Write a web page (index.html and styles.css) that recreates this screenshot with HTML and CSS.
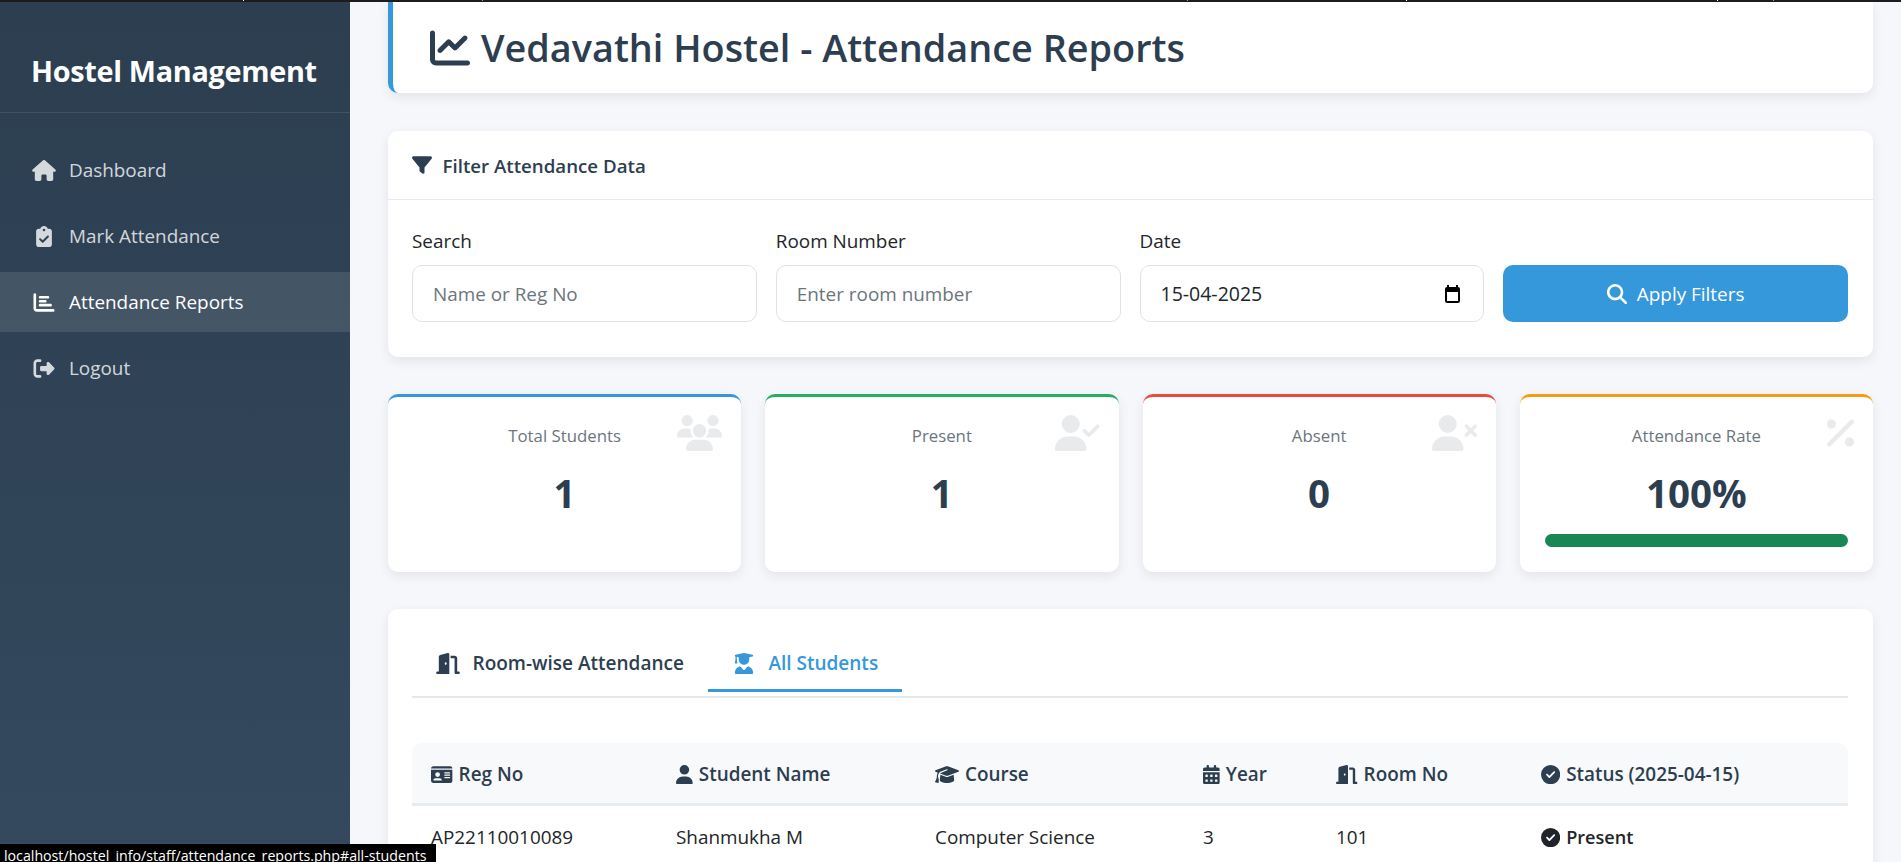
FILE: index.html
```html
<!DOCTYPE html>
<html lang="en">
<head>
    <meta charset="UTF-8">
    <meta name="viewport" content="width=device-width, initial-scale=1.0">
    <title>Vedavathi Hostel | Attendance Reports</title>
    <link rel="stylesheet" href="styles.css">
</head>
<body>
    <svg class="icon-defs" xmlns="http://www.w3.org/2000/svg">
        <symbol id="i-house" viewBox="0 0 576 512"><path d="M575.8 255.5c0 18-15 32.1-32 32.1h-32l.7 160.2c0 2.7-.2 5.4-.5 8.1V472c0 22.1-17.9 40-40 40H456c-1.1 0-2.2 0-3.3-.1c-1.4 .1-2.8 .1-4.2 .1H416 392c-22.1 0-40-17.9-40-40V448 384c0-17.7-14.3-32-32-32H256c-17.7 0-32 14.3-32 32v64 24c0 22.1-17.9 40-40 40H160 128.1c-1.5 0-3-.1-4.5-.2c-1.2 .1-2.4 .2-3.6 .2H104c-22.1 0-40-17.9-40-40V360c0-.9 0-1.9 .1-2.8V287.6H32c-18 0-32-14-32-32.1c0-9 3-17 10-24L266.4 8c7-7 15-8 22-8s15 2 21 7L564.8 231.5c8 7 12 15 11 24z"/></symbol>
        <symbol id="i-clipboard" viewBox="0 0 384 512"><path d="M192 0c-41.8 0-77.4 26.7-90.5 64H64C28.7 64 0 92.7 0 128V448c0 35.3 28.7 64 64 64H320c35.3 0 64-28.7 64-64V128c0-35.3-28.7-64-64-64H282.5C269.4 26.7 233.8 0 192 0zm0 64a32 32 0 1 1 0 64 32 32 0 1 1 0-64zM305 273L177 401c-9.4 9.4-24.6 9.4-33.9 0L79 337c-9.4-9.4-9.4-24.6 0-33.9s24.6-9.4 33.9 0l47 47L271 239c9.4-9.4 24.6-9.4 33.9 0s9.4 24.6 0 33.9z"/></symbol>
        <symbol id="i-chart-bar" viewBox="0 0 512 512"><path d="M32 32c17.7 0 32 14.3 32 32V400c0 8.8 7.2 16 16 16H480c17.7 0 32 14.3 32 32s-14.3 32-32 32H80c-44.2 0-80-35.8-80-80V64C0 46.3 14.3 32 32 32zm96 96c0-17.7 14.3-32 32-32l192 0c17.7 0 32 14.3 32 32s-14.3 32-32 32l-192 0c-17.7 0-32-14.3-32-32zm32 64H288c17.7 0 32 14.3 32 32s-14.3 32-32 32H160c-17.7 0-32-14.3-32-32s14.3-32 32-32zm0 96H416c17.7 0 32 14.3 32 32s-14.3 32-32 32H160c-17.7 0-32-14.3-32-32s14.3-32 32-32z"/></symbol>
        <symbol id="i-logout" viewBox="0 0 512 512"><path d="M377.9 105.9L500.7 228.7c7.2 7.2 11.3 17.1 11.3 27.3s-4.1 20.1-11.3 27.3L377.9 406.1c-6.4 6.4-15 9.9-24 9.9c-18.7 0-33.9-15.2-33.9-33.9l0-62.1-128 0c-17.7 0-32-14.3-32-32l0-64c0-17.7 14.3-32 32-32l128 0 0-62.1c0-18.7 15.2-33.9 33.9-33.9c9 0 17.6 3.6 24 9.9zM160 96L96 96c-17.7 0-32 14.3-32 32l0 256c0 17.7 14.3 32 32 32l64 0c17.7 0 32 14.3 32 32s-14.3 32-32 32l-64 0c-53 0-96-43-96-96L0 128C0 75 43 32 96 32l64 0c17.7 0 32 14.3 32 32s-14.3 32-32 32z"/></symbol>
        <symbol id="i-chart-line" viewBox="0 0 512 512"><path d="M64 64c0-17.7-14.3-32-32-32S0 46.3 0 64V400c0 44.2 35.8 80 80 80H480c17.7 0 32-14.3 32-32s-14.3-32-32-32H80c-8.8 0-16-7.2-16-16V64zm406.6 86.6c12.5-12.5 12.5-32.8 0-45.3s-32.8-12.5-45.3 0L320 210.7l-57.4-57.4c-12.5-12.5-32.8-12.5-45.3 0l-112 112c-12.5 12.5-12.5 32.8 0 45.3s32.8 12.5 45.3 0L240 221.3l57.4 57.4c12.5 12.5 32.8 12.5 45.3 0l128-128z"/></symbol>
        <symbol id="i-filter" viewBox="0 0 512 512"><path d="M3.9 54.9C10.5 40.9 24.5 32 40 32H472c15.5 0 29.5 8.9 36.1 22.9s4.6 30.5-5.2 42.5L320 320.9V448c0 12.1-6.8 23.2-17.7 28.6s-23.8 4.3-33.5-3l-64-48c-8.1-6-12.8-15.5-12.8-25.6V320.9L9 97.3C-.7 85.4-2.8 68.8 3.9 54.9z"/></symbol>
        <symbol id="i-search" viewBox="0 0 512 512"><path d="M416 208c0 45.9-14.9 88.3-40 122.7L502.6 457.4c12.5 12.5 12.5 32.8 0 45.3s-32.8 12.5-45.3 0L330.7 376c-34.4 25.2-76.8 40-122.7 40C93.1 416 0 322.9 0 208S93.1 0 208 0S416 93.1 416 208zM208 352a144 144 0 1 0 0-288 144 144 0 1 0 0 288z"/></symbol>
        <symbol id="i-users" viewBox="0 0 640 512"><path d="M144 0a80 80 0 1 1 0 160A80 80 0 1 1 144 0zM512 0a80 80 0 1 1 0 160A80 80 0 1 1 512 0zM0 298.7C0 239.8 47.8 192 106.7 192h42.7c15.9 0 31 3.5 44.6 9.7c-1.3 7.2-1.9 14.7-1.9 22.3c0 38.2 16.8 72.5 43.3 96c-.2 0-.4 0-.7 0H21.3C9.6 320 0 310.4 0 298.7zM405.3 320c-.2 0-.4 0-.7 0c26.6-23.5 43.3-57.8 43.3-96c0-7.6-.7-15-1.9-22.3c13.6-6.3 28.7-9.7 44.6-9.7h42.7C592.2 192 640 239.8 640 298.7c0 11.8-9.6 21.3-21.3 21.3H405.3zM224 224a96 96 0 1 1 192 0 96 96 0 1 1 -192 0zM128 485.3C128 411.7 187.7 352 261.3 352H378.7C452.3 352 512 411.7 512 485.3c0 14.7-11.9 26.7-26.7 26.7H154.7c-14.7 0-26.7-11.9-26.7-26.7z"/></symbol>
        <symbol id="i-user-check" viewBox="0 0 640 512"><path d="M96 128a128 128 0 1 1 256 0A128 128 0 1 1 96 128zM0 482.3C0 383.8 79.8 304 178.3 304h91.4C368.2 304 448 383.8 448 482.3c0 16.4-13.3 29.7-29.7 29.7H29.7C13.3 512 0 498.7 0 482.3zM625 177L497 305c-9.4 9.4-24.6 9.4-33.9 0l-64-64c-9.4-9.4-9.4-24.6 0-33.9s24.6-9.4 33.9 0l47 47L591 143c9.4-9.4 24.6-9.4 33.9 0s9.4 24.6 0 33.9z"/></symbol>
        <symbol id="i-user-xmark" viewBox="0 0 640 512"><path d="M96 128a128 128 0 1 1 256 0A128 128 0 1 1 96 128zM0 482.3C0 383.8 79.8 304 178.3 304h91.4C368.2 304 448 383.8 448 482.3c0 16.4-13.3 29.7-29.7 29.7H29.7C13.3 512 0 498.7 0 482.3zM471 143c9.4-9.4 24.6-9.4 33.9 0l47 47 47-47c9.4-9.4 24.6-9.4 33.9 0s9.4 24.6 0 33.9l-47 47 47 47c9.4 9.4 9.4 24.6 0 33.9s-24.6 9.4-33.9 0l-47-47-47 47c-9.4 9.4-24.6 9.4-33.9 0s-9.4-24.6 0-33.9l47-47-47-47c-9.4-9.4-9.4-24.6 0-33.9z"/></symbol>
        <symbol id="i-percent" viewBox="0 0 384 512"><path d="M374.6 118.6c12.5-12.5 12.5-32.8 0-45.3s-32.8-12.5-45.3 0l-320 320c-12.5 12.5-12.5 32.8 0 45.3s32.8 12.5 45.3 0l320-320zM128 128A64 64 0 1 0 0 128a64 64 0 1 0 128 0zM384 384a64 64 0 1 0 -128 0 64 64 0 1 0 128 0z"/></symbol>
        <symbol id="i-door" viewBox="0 0 576 512"><path d="M320 32c0-9.9-4.5-19.2-12.3-25.2S289.8-1.4 280.2 1l-179.9 45C79 51.3 64 70.5 64 92.5V448H32c-17.7 0-32 14.3-32 32s14.3 32 32 32H96 288h32V480 32zM256 256c0 17.7-10.7 32-24 32s-24-14.3-24-32s10.7-32 24-32s24 14.3 24 32zm96-128h96V480c0 17.7 14.3 32 32 32h64c17.7 0 32-14.3 32-32s-14.3-32-32-32H512V128c0-35.3-28.7-64-64-64H352v64z"/></symbol>
        <symbol id="i-graduate" viewBox="0 0 448 512"><path d="M219.3 .5c3.1-.6 6.3-.6 9.4 0l200 40C439.9 42.7 448 52.6 448 64s-8.1 21.3-19.3 23.5L352 102.9V160c0 70.7-57.3 128-128 128s-128-57.3-128-128V102.9L48 93.3v65.1l15.7 78.4c.9 4.7-.3 9.6-3.3 13.3s-7.6 5.9-12.4 5.9H16c-4.8 0-9.3-2.1-12.4-5.9s-4.3-8.6-3.3-13.3L16 158.4V86.6C6.5 83.3 0 74.3 0 64C0 52.6 8.1 42.7 19.3 40.5l200-40zM111.9 327.7c10.5-3.4 21.8 .4 29.4 8.5l71 75.5c6.3 6.7 17 6.7 23.3 0l71-75.5c7.6-8.1 18.9-11.9 29.4-8.5C401 348.6 448 409.4 448 481.3c0 17-13.8 30.7-30.7 30.7H30.7C13.8 512 0 498.2 0 481.3c0-71.9 47-132.7 111.9-153.6z"/></symbol>
        <symbol id="i-id-card" viewBox="0 0 576 512"><path d="M0 96l576 0c0-35.3-28.7-64-64-64H64C28.7 32 0 60.7 0 96zm0 32V416c0 35.3 28.7 64 64 64H512c35.3 0 64-28.7 64-64V128H0zM64 405.3c0-29.5 23.9-53.3 53.3-53.3H234.7c29.5 0 53.3 23.9 53.3 53.3c0 5.9-4.8 10.7-10.7 10.7H74.7c-5.9 0-10.7-4.8-10.7-10.7zM176 192a64 64 0 1 1 0 128 64 64 0 1 1 0-128zm176 16c0-8.8 7.2-16 16-16H496c8.8 0 16 7.2 16 16s-7.2 16-16 16H368c-8.8 0-16-7.2-16-16zm0 64c0-8.8 7.2-16 16-16H496c8.8 0 16 7.2 16 16s-7.2 16-16 16H368c-8.8 0-16-7.2-16-16zm0 64c0-8.8 7.2-16 16-16H496c8.8 0 16 7.2 16 16s-7.2 16-16 16H368c-8.8 0-16-7.2-16-16z"/></symbol>
        <symbol id="i-user" viewBox="0 0 448 512"><path d="M224 256A128 128 0 1 0 224 0a128 128 0 1 0 0 256zm-45.7 48C79.8 304 0 383.8 0 482.3C0 498.7 13.3 512 29.7 512H418.3c16.4 0 29.7-13.3 29.7-29.7C448 383.8 368.2 304 269.7 304H178.3z"/></symbol>
        <symbol id="i-cap" viewBox="0 0 640 512"><path d="M320 32c-8.1 0-16.1 1.4-23.7 4.1L15.8 137.4C6.3 140.9 0 149.9 0 160s6.3 19.1 15.8 22.6l57.9 20.9C57.3 229.3 48 259.8 48 291.9v28.1c0 28.4-10.8 57.7-22.3 80.8c-6.5 13-13.9 25.8-22.5 37.6C0 442.7-.9 448.3 .9 453.4s6 8.9 11.2 10.2l64 16c4.2 1.1 8.7 .3 12.4-2s6.3-6.1 7.1-10.4c8.6-42.8 4.3-81.2-2.1-108.7C90.3 344.3 86 329.8 80 316.5V291.9c0-30.2 10.2-58.7 27.9-81.5c12.9-15.5 29.6-28 49.2-35.7l157-61.7c8.2-3.2 17.5 .8 20.7 9s-.8 17.5-9 20.7l-157 61.7c-12.4 4.9-23.3 12.4-32.2 21.6l159.6 57.6c7.6 2.7 15.6 4.1 23.7 4.1s16.1-1.4 23.7-4.1L624.2 182.6c9.5-3.4 15.8-12.5 15.8-22.6s-6.3-19.1-15.8-22.6L343.7 36.1C336.1 33.4 328.1 32 320 32zM128 408c0 35.3 86 72 192 72s192-36.7 192-72L496.7 262.6 354.5 314c-11.1 4-22.8 6-34.5 6s-23.5-2-34.5-6L143.3 262.6 128 408z"/></symbol>
        <symbol id="i-calendar" viewBox="0 0 448 512"><path d="M128 0c17.7 0 32 14.3 32 32V64H288V32c0-17.7 14.3-32 32-32s32 14.3 32 32V64h48c26.5 0 48 21.5 48 48v48H0V112C0 85.5 21.5 64 48 64H96V32c0-17.7 14.3-32 32-32zM0 192H448V464c0 26.5-21.5 48-48 48H48c-26.5 0-48-21.5-48-48V192zm64 80v32c0 8.8 7.2 16 16 16h32c8.8 0 16-7.2 16-16V272c0-8.8-7.2-16-16-16H80c-8.8 0-16 7.2-16 16zm128 0v32c0 8.8 7.2 16 16 16h32c8.8 0 16-7.2 16-16V272c0-8.8-7.2-16-16-16H208c-8.8 0-16 7.2-16 16zm144-16c-8.8 0-16 7.2-16 16v32c0 8.8 7.2 16 16 16h32c8.8 0 16-7.2 16-16V272c0-8.8-7.2-16-16-16H336zM64 400v32c0 8.8 7.2 16 16 16h32c8.8 0 16-7.2 16-16V400c0-8.8-7.2-16-16-16H80c-8.8 0-16 7.2-16 16zm144-16c-8.8 0-16 7.2-16 16v32c0 8.8 7.2 16 16 16h32c8.8 0 16-7.2 16-16V400c0-8.8-7.2-16-16-16H208zm112 16v32c0 8.8 7.2 16 16 16h32c8.8 0 16-7.2 16-16V400c0-8.8-7.2-16-16-16H336c-8.8 0-16 7.2-16 16z"/></symbol>
        <symbol id="i-check" viewBox="0 0 512 512"><path d="M256 512A256 256 0 1 0 256 0a256 256 0 1 0 0 512zM369 209L241 337c-9.4 9.4-24.6 9.4-33.9 0l-64-64c-9.4-9.4-9.4-24.6 0-33.9s24.6-9.4 33.9 0l47 47L335 175c9.4-9.4 24.6-9.4 33.9 0s9.4 24.6 0 33.9z"/></symbol>
    </svg>

    <div class="top-strip"></div>
    <div class="layout">
        <aside class="sidebar">
            <div class="brand">Hostel Management</div>
            <nav class="side-nav">
                <a class="side-link" href="#"><svg class="side-icon"><use href="#i-house"/></svg>Dashboard</a>
                <a class="side-link" href="#"><svg class="side-icon"><use href="#i-clipboard"/></svg>Mark Attendance</a>
                <a class="side-link active" href="#"><svg class="side-icon"><use href="#i-chart-bar"/></svg>Attendance Reports</a>
                <a class="side-link" href="#"><svg class="side-icon"><use href="#i-logout"/></svg>Logout</a>
            </nav>
        </aside>

        <main class="content">
            <header class="page-head">
                <svg class="head-icon"><use href="#i-chart-line"/></svg>
                <h1>Vedavathi Hostel - Attendance Reports</h1>
            </header>

            <section class="card filter-card">
                <div class="filter-head"><svg class="filter-icon"><use href="#i-filter"/></svg>Filter Attendance Data</div>
                <form class="filter-body">
                    <div class="field">
                        <label>Search</label>
                        <input class="text-input" type="text" placeholder="Name or Reg No">
                    </div>
                    <div class="field">
                        <label>Room Number</label>
                        <input class="text-input" type="text" placeholder="Enter room number">
                    </div>
                    <div class="field">
                        <label>Date</label>
                        <div class="date-box">
                            <span>15-04-2025</span>
                            <svg class="date-icon" viewBox="0 0 15 18"><path d="M3 0v2.5M12 0v2.5" stroke-width="2"/><rect x="1" y="3" width="13" height="14" rx="1" stroke-width="2"/><path d="M1 5.5h13" stroke-width="3"/></svg>
                        </div>
                    </div>
                    <button class="apply-btn" type="button"><svg class="btn-icon"><use href="#i-search"/></svg>Apply Filters</button>
                </form>
            </section>

            <section class="stats">
                <div class="card stat stat-blue">
                    <svg class="stat-icon"><use href="#i-users"/></svg>
                    <div class="stat-label">Total Students</div>
                    <div class="stat-value">1</div>
                </div>
                <div class="card stat stat-green">
                    <svg class="stat-icon"><use href="#i-user-check"/></svg>
                    <div class="stat-label">Present</div>
                    <div class="stat-value">1</div>
                </div>
                <div class="card stat stat-red">
                    <svg class="stat-icon"><use href="#i-user-xmark"/></svg>
                    <div class="stat-label">Absent</div>
                    <div class="stat-value">0</div>
                </div>
                <div class="card stat stat-orange">
                    <svg class="stat-icon stat-icon-narrow"><use href="#i-percent"/></svg>
                    <div class="stat-label">Attendance Rate</div>
                    <div class="stat-value">100%</div>
                    <div class="progress"><div class="progress-bar" style="width: 100%"></div></div>
                </div>
            </section>

            <section class="card table-card">
                <div class="tabs">
                    <a class="tab" href="#"><svg class="tab-icon"><use href="#i-door"/></svg>Room-wise Attendance</a>
                    <a class="tab active" href="#"><svg class="tab-icon"><use href="#i-graduate"/></svg>All Students</a>
                </div>
                <table class="students">
                    <colgroup>
                        <col class="col-reg"><col class="col-name"><col class="col-course"><col class="col-year"><col class="col-room"><col>
                    </colgroup>
                    <thead>
                        <tr>
                            <th><svg class="th-icon door"><use href="#i-id-card"/></svg>Reg No</th>
                            <th><svg class="th-icon user"><use href="#i-user"/></svg>Student Name</th>
                            <th><svg class="th-icon cap"><use href="#i-cap"/></svg>Course</th>
                            <th><svg class="th-icon user"><use href="#i-calendar"/></svg>Year</th>
                            <th><svg class="th-icon door"><use href="#i-door"/></svg>Room No</th>
                            <th><svg class="th-icon"><use href="#i-check"/></svg>Status (2025-04-15)</th>
                        </tr>
                    </thead>
                    <tbody>
                        <tr>
                            <td>AP22110010089</td>
                            <td>Shanmukha M</td>
                            <td>Computer Science</td>
                            <td>3</td>
                            <td>101</td>
                            <td class="status"><svg class="th-icon"><use href="#i-check"/></svg>Present</td>
                        </tr>
                    </tbody>
                </table>
            </section>
        </main>
    </div>

    <div class="link-status">localhost/hostel_info/staff/attendance_reports.php#all-students</div>
</body>
</html>
```

FILE: styles.css
```css
* { box-sizing: border-box; }
html, body { margin: 0; padding: 0; height: 100%; overflow: hidden; }
body {
    font-family: "Open Sans", "Noto Sans", sans-serif;
    font-size: 18.9px;
    color: #212529;
    background: #f5f7fa;
    display: flex;
    flex-direction: column;
}
.icon-defs { display: none; }
svg { fill: currentColor; }

.top-strip {
    height: 2px;
    flex: none;
    background:
        linear-gradient(#fff, #fff) 243px 0 / 1px 1px no-repeat,
        linear-gradient(#6ea8e0, #6ea8e0) 482px 0 / 1px 1px no-repeat,
        linear-gradient(#6ea8e0, #6ea8e0) 1187px 0 / 1px 1px no-repeat,
        linear-gradient(#fff, #fff) 1406px 0 / 1px 1px no-repeat,
        linear-gradient(#fff, #fff) 1717px 0 / 1px 1px no-repeat,
        linear-gradient(#6ea8e0, #6ea8e0) 1773px 0 / 1px 1px no-repeat,
        #1c1c1c;
}
.layout { flex: 1; display: flex; min-height: 0; }

/* sidebar */
.sidebar {
    width: 350px;
    flex: none;
    background: linear-gradient(180deg, #2c3e50, #34495e);
    color: #fff;
}
.brand {
    height: 111px;
    padding: 26px 0 0 31px;
    display: flex;
    align-items: center;
    font-size: 28.8px;
    font-weight: 700;
    letter-spacing: -0.3px;
    border-bottom: 1px solid rgba(255, 255, 255, 0.1);
}
.side-nav { padding-top: 27px; display: flex; flex-direction: column; gap: 6px; }
.side-link {
    height: 60px;
    padding-left: 32px;
    display: flex;
    align-items: center;
    font-size: 18.9px;
    color: rgba(255, 255, 255, 0.8);
    text-decoration: none;
}
.side-link.active { background: rgba(255, 255, 255, 0.1); color: #fff; }
.side-icon { width: 24px; height: 21px; margin-right: 13px; flex: none; }

/* main column */
.content { flex: 1; min-width: 0; padding: 0 28px 0 38px; overflow: hidden; }
.card {
    background: #fff;
    border-radius: 10px;
    box-shadow: 0 4px 12px rgba(0, 0, 0, 0.08);
}
.page-head {
    height: 91px;
    padding-left: 37px;
    display: flex;
    align-items: center;
    gap: 11px;
    background: #fff;
    border-left: 5px solid #3498db;
    border-radius: 0 0 10px 10px;
    box-shadow: 0 4px 12px rgba(0, 0, 0, 0.08);
    color: #2c3e50;
}
.page-head h1 { margin: 0; font-size: 37.8px; font-weight: 600; line-height: 1.2; }
.head-icon { width: 40px; height: 40px; flex: none; }

/* filter */
.filter-card { margin-top: 38px; }
.filter-head {
    height: 69px;
    padding-left: 24px;
    display: flex;
    align-items: center;
    font-size: 18.7px;
    font-weight: 600;
    color: #2c3e50;
    border-bottom: 1px solid #e9ecef;
}
.filter-icon { width: 20px; height: 20px; margin-right: 10.5px; }
.filter-body {
    padding: 29px 25px 35px 24px;
    display: grid;
    grid-template-columns: repeat(4, 1fr);
    gap: 19px;
    align-items: end;
}
.field label { display: block; line-height: 24px; margin-bottom: 12px; }
.text-input, .date-box {
    width: 100%;
    height: 57px;
    padding: 0 20px;
    border: 1px solid #dee2e6;
    border-radius: 10px;
    background: #fff;
    font: inherit;
    color: #212529;
}
.text-input::placeholder { color: #6c757d; opacity: 1; }
.date-box { display: flex; align-items: center; justify-content: space-between; padding-right: 23px; font-size: 19.5px; }
.date-icon { width: 15px; height: 18px; fill: none; stroke: #000; }
.apply-btn {
    height: 57px;
    border: 0;
    border-radius: 10px;
    background: #3498db;
    color: #fff;
    font: inherit;
    display: flex;
    align-items: center;
    justify-content: center;
}
.btn-icon { width: 20px; height: 20px; margin-right: 10px; }

/* stat cards */
.stats {
    margin-top: 37px;
    display: grid;
    grid-template-columns: repeat(4, 1fr);
    gap: 24px;
}
.stat {
    position: relative;
    padding: 27px 25px 25px;
    border-top: 3px solid #3498db;
    text-align: center;
    height: 178px;
}
.stat-green { border-top-color: #27ae60; }
.stat-red { border-top-color: #e74c3c; }
.stat-orange { border-top-color: #f39c12; }
.stat-icon {
    position: absolute;
    top: 18px;
    right: 19px;
    width: 45px;
    height: 36px;
    color: #2c3e50;
    opacity: 0.1;
}
.stat-icon-narrow { width: 27px; }
.stat-label { font-size: 16.8px; line-height: 24px; color: #6c757d; }
.stat-value {
    margin-top: 21px;
    font-size: 38.5px;
    font-weight: 700;
    line-height: 48px;
    color: #2c3e50;
}
.progress { margin-top: 17px; height: 13px; border-radius: 7px; background: #e9ecef; overflow: hidden; }
.progress-bar { height: 100%; background: #198754; }

/* tabs + table */
.table-card { margin-top: 37px; padding: 24px 25px 40px 24px; }
.tabs {
    display: flex;
    padding-bottom: 4px;
    border-bottom: 2px solid #e5e7ea;
}
.tab {
    height: 59px;
    padding: 4px 24px 0;
    display: flex;
    align-items: center;
    font-size: 19px;
    font-weight: 600;
    color: #2c3e50;
    text-decoration: none;
    border-bottom: 3px solid transparent;
}
.tab.active { color: #3498db; border-bottom-color: #3498db; }
.tab-icon { width: 24px; height: 21px; margin-right: 12.5px; flex: none; }

.students {
    margin-top: 45px;
    width: 100%;
    table-layout: fixed;
    border-collapse: separate;
    border-spacing: 0;
}
.col-reg { width: 245px; }
.col-name { width: 259px; }
.col-course { width: 268px; }
.col-year { width: 133px; }
.col-room { width: 205px; }
.students th {
    height: 63px;
    padding: 2px 19px 0;
    background: #f8f9fa;
    border-bottom: 3px solid #e9ecef;
    text-align: left;
    font-weight: 600;
    font-size: 18.9px;
    color: #2c3e50;
    white-space: nowrap;
}
.students th:first-child { border-top-left-radius: 10px; }
.students th:last-child { border-top-right-radius: 10px; }
.students td { padding: 19px; line-height: 24px; }
.students .status { font-weight: 600; font-size: 18.1px; }
.th-icon { width: 19.2px; height: 19.2px; margin-right: 6px; vertical-align: -3px; }
.th-icon.door { width: 21.6px; }
.th-icon.user { width: 16.8px; }
.th-icon.cap { width: 24px; }

/* browser link preview at the bottom corner */
.link-status {
    position: fixed;
    left: 0;
    bottom: 0;
    width: 436px;
    height: 18px;
    padding-left: 4px;
    background: #000;
    color: #fff;
    font-size: 14.2px;
    line-height: 24px;
    white-space: nowrap;
    overflow: hidden;
}
```
